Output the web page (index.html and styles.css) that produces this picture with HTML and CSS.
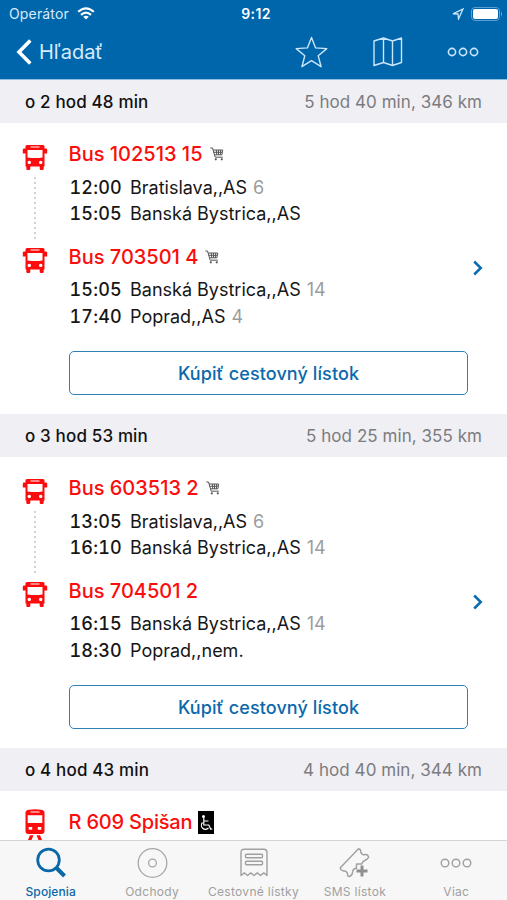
FILE: index.html
```html
<!DOCTYPE html>
<html lang="sk">
<head>
<meta charset="utf-8">
<title>Spojenia</title>
<link rel="stylesheet" href="styles.css">
</head>
<body>
<svg class="defs" width="0" height="0" aria-hidden="true">
  <symbol id="bus" viewBox="0 0 26 26">
    <path fill-rule="evenodd" fill="currentColor" d="M5 0h16q1.500 0 1.500 1.500V3.500H24q1.200 0 1.200 1.200V8.500h-2.700V21.500h-.8v2.300q0 1.200-1.200 1.200h-1.600q-1.200 0-1.200-1.200v-2.300H8.300v2.300q0 1.200-1.200 1.200H5.500q-1.200 0-1.200-1.200v-2.300h-.8V8.500H.8V4.700q0-1.200 1.200-1.200h1.500V1.500Q3.500 0 5 0zM8.500 1.500v1h9v-1zM5.500 5v7.500q7.500 1 15 0V5zM7.300 15.700a1.700 1.700 0 1 0 .01 0zM18.700 15.700a1.700 1.700 0 1 0 .01 0z"/>
  </symbol>
  <symbol id="train" viewBox="0 0 26 31">
    <path fill-rule="evenodd" fill="currentColor" d="M7 .8q6-1 12 0 3.500.4 3.500 3V22q0 3-3 3h-13q-3 0-3-3V3.800Q3.500 1.200 7 .8zM8.500 2.400v1h9v-1zM5.700 6.200V14h14.600V6.200zM6.700 18v2.800h3.500V18zM15.800 18v2.800h3.500V18zM8 26.200h3.500L9.500 31H6zM14.500 26.200H18l2 4.800h-3.500z"/>
  </symbol>
  <symbol id="cart" viewBox="0 0 14 14">
    <path fill="none" stroke="currentColor" stroke-width="1" d="M.3 1h2.200l2.700 9.200h7.600M3.200 3h9.500l-.8 4.800H4.400M3.700 5.300h8.500M6.300 3l.5 5M8.500 3v5M10.700 3l-.4 5"/>
    <circle cx="5.800" cy="12.300" r="1.100" fill="currentColor"/><circle cx="11.800" cy="12.300" r="1.100" fill="currentColor"/>
  </symbol>
  <symbol id="next" viewBox="0 0 10 16"><path fill="none" stroke="currentColor" stroke-width="2.500" d="M1.200 1.500 7.800 8l-6.600 6.500"/></symbol>
  <symbol id="more" viewBox="0 0 32 10"><g fill="none" stroke="currentColor" stroke-width="1.600"><circle cx="5" cy="5" r="3.600"/><circle cx="16" cy="5" r="3.600"/><circle cx="27" cy="5" r="3.600"/></g></symbol>
</svg>
<div class="app">
  <header class="top">
    <div class="status">
      <div class="carrier"><span>Operátor</span>
        <svg width="18" height="13" viewBox="0 0 18 13"><g fill="none" stroke="#fff" stroke-width="2.200"><path d="M1.200 4.800q7.800-7 15.600 0"/><path d="M4 7.800q5-4.400 10 0"/></g><path fill="#fff" d="M6.200 9.800q2.800-2.200 5.600 0L9 12.600z"/></svg>
      </div>
      <span class="clock">9:12</span>
      <div class="indicators">
        <svg width="12" height="12" viewBox="0 0 12 12"><path fill="none" stroke="#cfe6fa" stroke-width="1.300" d="M1 5.800 11 1 6.500 11 6 6z"/></svg>
        <svg width="32" height="14" viewBox="0 0 32 14"><rect x=".5" y=".5" width="28" height="13" rx="3.500" fill="none" stroke="#5c9fd0"/><rect x="2" y="2" width="25" height="10" rx="2" fill="#fff"/><path fill="#70acd8" d="M30 4.500q2 2.500 0 5z"/></svg>
      </div>
    </div>
    <nav class="nav">
      <a class="back"><svg width="16" height="26" viewBox="0 0 16 26"><path fill="none" stroke="#fff" stroke-width="3.600" d="M14.300 1.600 3 13l11.300 11.400"/></svg><span>Hľadať</span></a>
      <div class="actions">
        <svg width="34" height="33" viewBox="0 0 34 33"><path fill="none" stroke="#c9e5fb" stroke-width="1.400" stroke-linejoin="round" d="m16.500 1.500 4.100 10.400 11.200.7-8.600 7.200 2.900 10.900-9.600-6-9.600 6 2.900-10.900-8.600-7.200 11.200-.7z"/></svg>
        <svg width="30" height="30" viewBox="0 0 30 30"><path fill="none" stroke="#c9e5fb" stroke-width="1.400" stroke-linejoin="round" d="m1 4 9.500-3 9 3 9-3v24.500l-9 3-9-3-9.500 3zM10.500 1v24.500M19.500 4v24.500"/></svg>
        <svg class="dots" width="32" height="10"><use href="#more"/></svg>
      </div>
    </nav>
  </header>

  <main class="list">
    <section>
      <h2 class="head"><span class="when">o 2 hod 48 min</span><span class="length">5 hod 40 min, 346 km</span></h2>
      <div class="trip">
        <div class="legs">
          <article class="leg">
            <div class="rail"><svg width="26" height="26"><use href="#bus"/></svg><i class="link"></i></div>
            <div><h3>Bus 102513 15<svg class="cart" width="14" height="14"><use href="#cart"/></svg></h3>
              <p><time>12:00</time><span>Bratislava,,AS</span><small>6</small></p>
              <p><time>15:05</time><span>Banská Bystrica,,AS</span></p></div>
          </article>
          <article class="leg">
            <div class="rail"><svg width="26" height="26"><use href="#bus"/></svg></div>
            <div><h3>Bus 703501 4<svg class="cart" width="14" height="14"><use href="#cart"/></svg></h3>
              <p><time>15:05</time><span>Banská Bystrica,,AS</span><small>14</small></p>
              <p><time>17:40</time><span>Poprad,,AS</span><small>4</small></p></div>
          </article>
          <button class="buy">Kúpiť cestovný lístok</button>
        </div>
        <svg class="next" width="10" height="16"><use href="#next"/></svg>
      </div>
    </section>
    <section>
      <h2 class="head"><span class="when">o 3 hod 53 min</span><span class="length">5 hod 25 min, 355 km</span></h2>
      <div class="trip">
        <div class="legs">
          <article class="leg">
            <div class="rail"><svg width="26" height="26"><use href="#bus"/></svg><i class="link"></i></div>
            <div><h3>Bus 603513 2<svg class="cart" width="14" height="14"><use href="#cart"/></svg></h3>
              <p><time>13:05</time><span>Bratislava,,AS</span><small>6</small></p>
              <p><time>16:10</time><span>Banská Bystrica,,AS</span><small>14</small></p></div>
          </article>
          <article class="leg">
            <div class="rail"><svg width="26" height="26"><use href="#bus"/></svg></div>
            <div><h3>Bus 704501 2</h3>
              <p><time>16:15</time><span>Banská Bystrica,,AS</span><small>14</small></p>
              <p><time>18:30</time><span>Poprad,,nem.</span></p></div>
          </article>
          <button class="buy">Kúpiť cestovný lístok</button>
        </div>
        <svg class="next" width="10" height="16"><use href="#next"/></svg>
      </div>
    </section>
    <section>
      <h2 class="head"><span class="when">o 4 hod 43 min</span><span class="length">4 hod 40 min, 344 km</span></h2>
      <div class="trip">
        <div class="legs">
          <article class="leg">
            <div class="rail train"><svg width="26" height="31"><use href="#train"/></svg></div>
            <div><h3 class="named">R 609 Spišan<svg class="access" width="16" height="23" viewBox="0 0 16 23"><path d="M0 0h16v23H0z"/><circle cx="5.500" cy="5.500" r="1.500" fill="#fff"/><path fill="none" stroke="#fff" stroke-width="1.200" d="M5.800 7v7h5l2 4.300 1.500-.6M6 10h4.500M4.500 11.500a4 4 0 1 0 6 5.500"/></svg></h3></div>
          </article>
        </div>
      </div>
    </section>
  </main>

  <footer class="tabs">
    <a class="tab active"><svg width="32" height="32" viewBox="0 0 32 32"><circle cx="13.500" cy="13" r="10.800" fill="none" stroke="currentColor" stroke-width="2.800"/><path stroke="currentColor" stroke-width="4" d="m21 20.500 8.500 8.500"/></svg><span>Spojenia</span></a>
    <a class="tab"><svg width="32" height="32" viewBox="0 0 32 32"><g fill="none" stroke="#a6a6a6" stroke-width="1.300"><circle cx="16.500" cy="16" r="14.300"/><circle cx="16.500" cy="16" r="3.900"/></g></svg><span>Odchody</span></a>
    <a class="tab"><svg width="32" height="32" viewBox="0 0 32 32"><g fill="none" stroke="#a0a0a0" stroke-width="1.400"><path stroke-linejoin="round" d="M4 28.500V5.500Q4 2.200 7.300 2.200h19.400Q30 2.200 30 5.500v23l-3.200-2.600-3.300 2.600-3.200-2.600-3.300 2.600-3.200-2.600-3.300 2.600-3.200-2.600z"/><rect x="8.500" y="7.200" width="17" height="3.600" rx="1"/><rect x="8.500" y="14.200" width="17" height="3.600" rx="1"/></g></svg><span>Cestovné lístky</span></a>
    <a class="tab"><svg width="32" height="32" viewBox="0 0 32 32"><path fill="none" stroke="#a0a0a0" stroke-width="1.400" stroke-linejoin="round" d="M17.500 21.500h-1.700q-2 1-2.300 3.500.2 3-3 4.500-2.300 0-2-3-1-3-4-2.500-3-.6-3.200-3.200L19.500 1.800q2.500.5 2.300 3.400.6 2.800 3.700 2.500 3-1 4.200 2.600-1 2-4 3.200-2.200 1-3 3.500h-5.200z"/><path stroke="#8f8f8f" stroke-width="3" d="M17.500 24h11M23 18.500v11"/></svg><span>SMS lístok</span></a>
    <a class="tab"><svg width="32" height="32" viewBox="0 -11 32 32"><g fill="none" stroke="#a0a0a0" stroke-width="1.400"><circle cx="5" cy="5" r="3.800"/><circle cx="16" cy="5" r="3.800"/><circle cx="27" cy="5" r="3.800"/></g></svg><span>Viac</span></a>
  </footer>
</div>
</body>
</html>
```
FILE: styles.css
```css
* { box-sizing: border-box; margin: 0; padding: 0; }
body { font-family: Inter, "Liberation Sans", sans-serif; color: #161616; background: #fff; overflow: hidden; }
svg { display: block; flex: none; }
.defs { position: absolute; }
.app { height: 900px; display: flex; flex-direction: column; }
.top { flex: none; height: 80px; background: #0066ab; border-bottom: 1px solid #8fbfdf; color: #fff; }
.status { height: 27px; display: grid; grid-template-columns: 1fr auto 1fr; align-items: center; padding: 0 4px 0 9px; }
.carrier { display: flex; align-items: center; gap: 8px; font-size: 14px; letter-spacing: .15px; color: #d7ebfb; }
.clock { font-size: 14px; font-weight: 600; letter-spacing: .4px; }
.indicators { display: flex; align-items: center; justify-content: flex-end; gap: 7px; }
.nav { height: 50px; display: flex; align-items: center; justify-content: space-between; padding: 0 28px 0 16px; }
.back { display: flex; align-items: center; gap: 7px; font-size: 20px; color: #d7ebfb; }
.actions { display: flex; align-items: center; color: #c9e5fb; }
.actions svg + svg { margin-left: 44px; }
.list { flex: 1; min-height: 0; overflow: hidden; }
.head { height: 43px; display: flex; align-items: center; justify-content: space-between; padding: 0 25px; background: #efeff4; font-size: 17px; }
.when { font-weight: 500; letter-spacing: .15px; color: #111; }
.length { font-weight: 400; letter-spacing: .05px; color: #7c7c80; }
.trip { height: 291px; display: flex; align-items: center; padding: 14px 25px 15px 22px; }
.legs { flex: 1; align-self: flex-start; }
.leg { display: flex; height: 102.500px; }
.rail { width: 46.500px; flex: none; padding-top: 8px; color: #fb0d0d; }
.rail.train { padding-top: 4px; }
.link { display: block; width: 2px; height: 62px; margin: 6px 0 0 12px; background: repeating-linear-gradient(#d2d2d2 0 2px, transparent 2px 5px); }
h3 { display: flex; align-items: center; height: 34px; margin-bottom: 3px; font-size: 20px; font-weight: 500; color: #fb0d0d; white-space: nowrap; }
.named { letter-spacing: -.2px; }
.cart { margin-left: 7px; color: #555; }
.access { margin-left: 6px; }
p { display: flex; align-items: center; height: 26.500px; font-size: 18px; white-space: nowrap; }
time { width: 61.500px; padding-left: 1px; font-weight: 500; font-variant-numeric: tabular-nums; letter-spacing: .2px; }
small { margin-left: 6px; font-size: 18px; color: #9c9c9c; }
.buy { display: block; width: 399px; height: 44px; margin: 9px 0 0 47px; border: 1.500px solid #3080b8; border-radius: 5px; background: #fff; color: #0b69ab; font: 500 18px Inter, sans-serif; letter-spacing: .1px; }
.next { color: #0b6cb0; margin: 0 -1px 0 0; }
.tabs { flex: none; height: 60px; display: grid; grid-template-columns: repeat(5, 1fr); border-top: 1px solid #d4d4d6; background: #f7f7f7; }
.tab { display: flex; flex-direction: column; align-items: center; padding-top: 6px; font-size: 12px; line-height: 15px; color: #a0a0a0; white-space: nowrap; }
.tab span { margin-top: 5px; letter-spacing: .3px; }
.active { color: #0b68a8; }
.active span { font-weight: 500; letter-spacing: .1px; }
```
